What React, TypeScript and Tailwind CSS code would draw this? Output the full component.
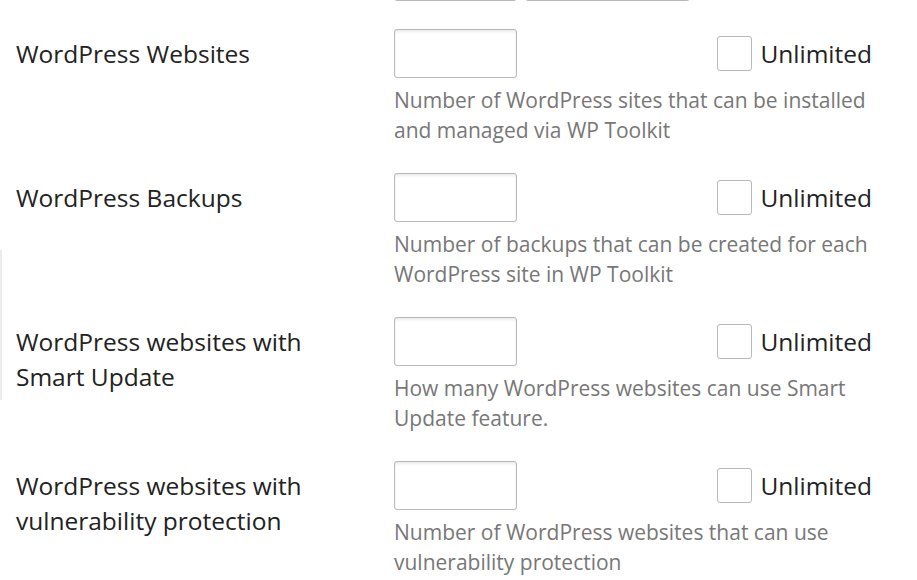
import React from "react";

const rows = [
  { label: ["WordPress Websites"], desc: ["Number of WordPress sites that can be installed", "and managed via WP Toolkit"] },
  { label: ["WordPress Backups"], desc: ["Number of backups that can be created for each", "WordPress site in WP Toolkit"] },
  { label: ["WordPress websites with", "Smart Update"], desc: ["How many WordPress websites can use Smart", "Update feature."] },
  { label: ["WordPress websites with", "vulnerability protection"], desc: ["Number of WordPress websites that can use", "vulnerability protection"] },
];

const inputCls =
  "h-[49px] rounded-[3px] border border-[#b9b9b9] bg-white shadow-[inset_0_2px_3px_rgba(0,0,0,0.08)]";

export default function App() {
  return (
    <div
      className="relative w-[917px] h-[580px] overflow-hidden bg-white text-[#222]"
      style={{ fontFamily: '"Open Sans", sans-serif' }}
    >
      <div className="absolute left-0 top-[250px] h-[150px] w-[2px] bg-[#ececec]" />
      <div className="flex gap-[8px] pl-[394px] mt-[-48px]">
        <div className={`${inputCls} w-[123px]`} />
        <div className={`${inputCls} w-[165px]`} />
      </div>
      <div className="flex flex-col pt-[28px]">
        {rows.map((r, i) => (
          <div key={i} className="flex h-[144px]">
            <div className="w-[394px] pl-[16px] pt-[7px] text-[24.5px] leading-[35px] text-[#222]">
              {r.label.map((l, j) => (
                <div key={j}>{l}</div>
              ))}
            </div>
            <div className="w-[478px] flex flex-col">
              <div className="flex items-center justify-between">
                <div className={`${inputCls} w-[123px]`} />
                <div className="flex items-center gap-[8px]">
                  <div className="w-[35px] h-[35px] rounded-[3px] border border-[#b9b9b9] bg-white" />
                  <span className="text-[24.5px] leading-[35px] text-[#222]">Unlimited</span>
                </div>
              </div>
              <div className="mt-[7px] text-[21px] leading-[30px] text-[#777]">
                {r.desc.map((d, j) => (
                  <div key={j}>{d}</div>
                ))}
              </div>
            </div>
          </div>
        ))}
      </div>
    </div>
  );
}
